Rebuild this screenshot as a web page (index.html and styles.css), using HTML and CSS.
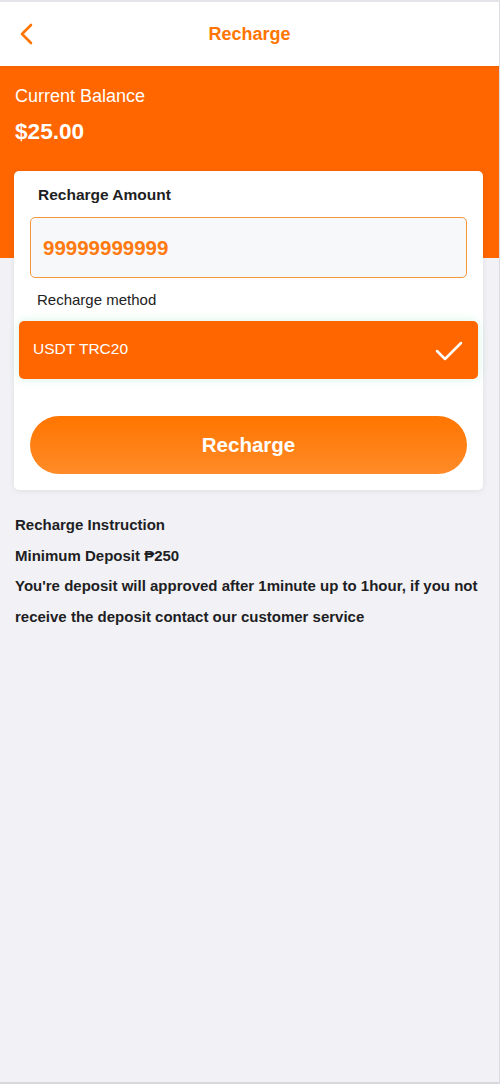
FILE: index.html
```html
<!DOCTYPE html>
<html lang="en">
<head>
    <meta charset="UTF-8">
    <meta name="viewport" content="width=device-width, initial-scale=1.0">
    <title>Recharge</title>
    <link rel="stylesheet" href="styles.css">
</head>
<body>
    <div class="page">
        <div class="header">
            <a class="back" href="#">
                <svg width="14" height="22" viewBox="0 0 14 22">
                    <path d="M12 2 L3 11 L12 20" fill="none" stroke="#ff7500" stroke-width="2.6" stroke-linecap="round" stroke-linejoin="round"/>
                </svg>
            </a>
            <h1>Recharge</h1>
        </div>

        <div class="balance">
            <div class="balance-label">Current Balance</div>
            <div class="balance-value">$25.00</div>
        </div>

        <div class="card">
            <div class="card-title">Recharge Amount</div>
            <div class="amount-box">
                <input type="text" class="amount" value="99999999999">
            </div>
            <div class="method-label">Recharge method</div>
            <div class="method active">
                <span>USDT TRC20</span>
                <svg width="28" height="20" viewBox="0 0 28 20">
                    <path d="M2 10 L10 18 L26 2" fill="none" stroke="white" stroke-width="2.5" stroke-linecap="round" stroke-linejoin="round"/>
                </svg>
            </div>
            <button class="recharge-btn">Recharge</button>
        </div>

        <div class="instructions">
            <p>Recharge Instruction</p>
            <p>Minimum Deposit ₱250</p>
            <p>You're deposit will approved after 1minute up to 1hour, if you not receive the deposit contact our customer service</p>
        </div>
    </div>
</body>
</html>
```

FILE: styles.css
```css
* {
    box-sizing: border-box;
}
body {
    margin: 0;
    font-family: "Liberation Sans", Arial, sans-serif;
    background-color: #f2f2f6;
}
.page {
    min-height: 1084px;
    border-top: 2px solid #e3e5ea;
    border-right: 1px solid #dcdde2;
    border-bottom: 2px solid #d8d8dc;
    background-color: #f2f2f6;
}
.header {
    position: relative;
    height: 64px;
    background-color: white;
    display: flex;
    align-items: center;
    justify-content: center;
}
.header h1 {
    margin: 0;
    font-size: 18px;
    font-weight: bold;
    color: #ff7500;
}
.back {
    position: absolute;
    left: 19px;
    top: 21px;
    display: flex;
}
.balance {
    background: linear-gradient(#f26100 0, #ff6600 3px);
    height: 192px;
    padding: 20px 15px 0;
    color: white;
}
.balance-label {
    font-size: 18px;
    line-height: 20px;
}
.balance-value {
    margin-top: 13px;
    font-size: 22.6px;
    font-weight: bold;
    line-height: 26px;
}
.card {
    margin: -87px 16px 0 14px;
    background-color: white;
    border-radius: 5px;
    box-shadow: 0 1px 6px rgba(0, 0, 0, 0.08);
    padding: 14px 16px 16px 16px;
    position: relative;
}
.card-title {
    font-size: 15.5px;
    font-weight: bold;
    color: #1e1e24;
    padding-left: 8px;
    line-height: 19px;
}
.amount-box {
    margin-top: 13px;
    height: 61px;
    border: 1px solid #f5963a;
    border-radius: 5px;
    background-color: #f7f8fa;
    display: flex;
    align-items: center;
    padding-left: 12px;
}
.amount {
    border: none;
    background: transparent;
    outline: none;
    font-family: inherit;
    font-size: 20.5px;
    font-weight: bold;
    color: #ff7a10;
    width: 100%;
    padding: 0;
}
.method-label {
    margin-top: 13px;
    padding-left: 7px;
    font-size: 15px;
    color: #222;
    line-height: 18px;
}
.method {
    margin: 12px -11px 0 -11px;
    height: 58px;
    border-radius: 5px;
    background-color: #ff6600;
    color: white;
    font-size: 15.5px;
    display: flex;
    align-items: center;
    justify-content: space-between;
    padding: 0 15px 0 14px;
    box-shadow: 0 0 10px rgba(80, 220, 150, 0.25);
}
.method span {
    margin-top: -2px;
}
.method svg {
    margin-top: 1px;
}
.recharge-btn {
    display: block;
    width: 100%;
    margin-top: 37px;
    height: 58px;
    border: none;
    border-radius: 29px;
    background: linear-gradient(#ff7500, #ff8b28);
    color: white;
    font-family: inherit;
    font-size: 20.5px;
    font-weight: bold;
    cursor: pointer;
}
.instructions {
    padding: 20px 15px 0;
    color: #1e1e24;
    font-size: 15px;
    font-weight: bold;
}
.instructions p {
    margin: 0;
    line-height: 30.7px;
}
```
